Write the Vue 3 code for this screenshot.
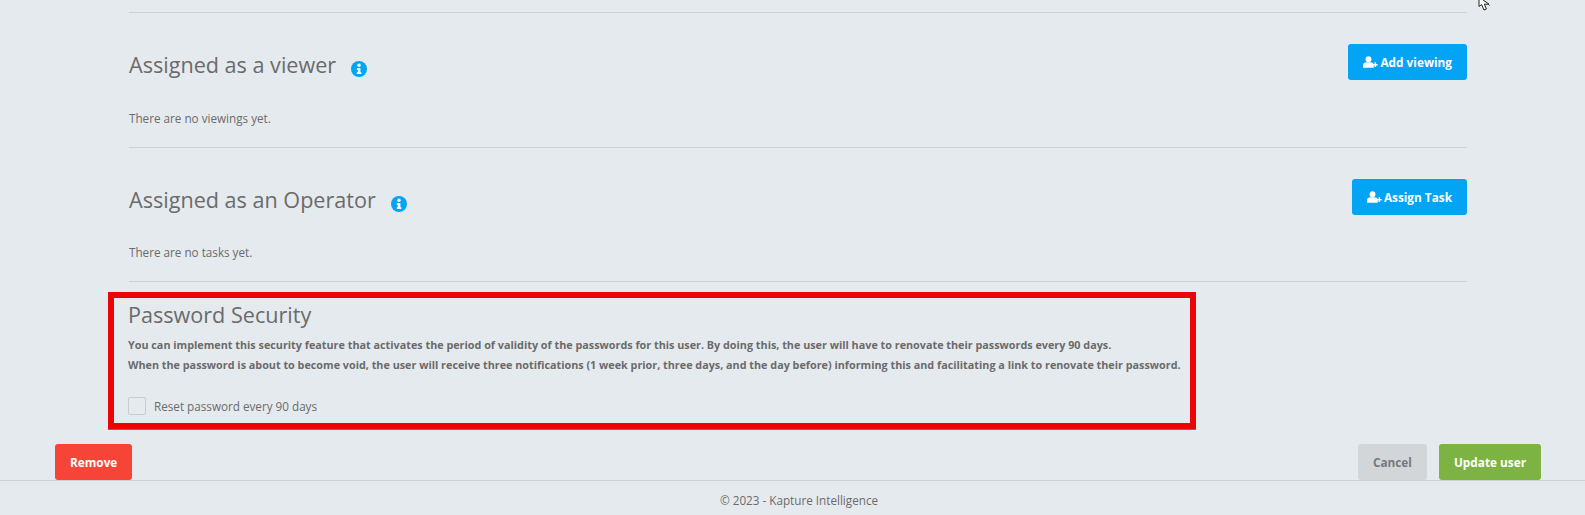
<script setup>
const sections = [
  { title: 'Assigned as a viewer', button: 'Add viewing', empty: 'There are no viewings yet.' },
  { title: 'Assigned as an Operator', button: 'Assign Task', empty: 'There are no tasks yet.' },
]
</script>

<template>
  <div class="page">
    <svg class="cursor" width="14" height="12" viewBox="0 0 14 12">
      <path d="M1 -3V6.5L3.6 4.6L6 10L8.4 9L6.4 4.2H11Z" fill="#fff" stroke="#222" stroke-width="1" />
      <path d="M10.5 4.5L11.5 5.5" stroke="#222" stroke-width="1" fill="none" />
    </svg>
    <main class="content">
      <section v-for="s in sections" :key="s.title" class="assigned">
        <div class="assigned-head">
          <h2>{{ s.title }}</h2>
          <svg class="info" viewBox="0 0 16 16" width="16" height="16">
            <circle cx="8" cy="8" r="8" fill="#03a4f4" />
            <circle cx="8" cy="4.2" r="1.7" fill="#fff" />
            <path d="M5.8 7H9.4V11.2H10.4V12.9H5.8V11.2H6.8V8.7H5.8Z" fill="#fff" />
          </svg>
          <button class="btn blue">
            <svg class="user-plus" viewBox="0 0 18 14" width="18" height="14">
              <circle cx="6.6" cy="3.6" r="3.5" fill="#fff" />
              <path d="M0 14V11.2C0 8.8 1.9 7.4 3.9 7.4H9.3C10.9 7.4 12.3 8.4 12.9 10V14Z" fill="#fff" />
              <path d="M14.8 7.4V13M12 10.2H17.6" stroke="#fff" stroke-width="1.8" />
            </svg>
            {{ s.button }}
          </button>
        </div>
        <p class="empty">{{ s.empty }}</p>
      </section>

      <section class="security">
        <h2>Password Security</h2>
        <p class="desc">
          You can implement this security feature that activates the period of validity of the passwords for this user. By doing this, the user will have to renovate their passwords every 90 days.<br>
          When the password is about to become void, the user will receive three notifications (1 week prior, three days, and the day before) informing this and facilitating a link to renovate their password.
        </p>
        <label class="check">
          <span class="box"></span>
          Reset password every 90 days
        </label>
      </section>
    </main>

    <div class="actions">
      <button class="btn red">Remove</button>
      <div class="right">
        <button class="btn grey">Cancel</button>
        <button class="btn green">Update user</button>
      </div>
    </div>

    <footer>© 2023 - Kapture Intelligence</footer>
  </div>
</template>

<style>
html, body {
  margin: 0;
  background: #e5eaee;
}
</style>

<style scoped>
.page {
  position: relative;
  height: 515px;
  overflow: hidden;
  background: #e5eaee;
  color: #6b6b6b;
  font-family: "Open Sans", sans-serif;
}
.cursor {
  position: absolute;
  top: 0;
  left: 1478px;
}
.content {
  padding-top: 12px;
}
.assigned {
  margin: 0 118px 0 129px;
  height: 134px;
  border-top: 1px solid #cdd1d4;
}
.assigned + .assigned {
  height: 133px;
  border-bottom: 1px solid #cdd1d4;
}
.assigned-head {
  display: flex;
  align-items: flex-start;
  padding-top: 31px;
  height: 36px;
}
.assigned-head h2 {
  margin: 3px 0 0;
  font-size: 21.6px;
  font-weight: 400;
  line-height: 36px;
}
.info {
  margin: 17px 0 0 15px;
}
.btn {
  border: none;
  border-radius: 3px;
  height: 36px;
  font-family: "Open Sans", sans-serif;
  font-size: 11.8px;
  font-weight: 700;
  color: #fff;
  padding: 0 15px;
}
.blue {
  margin-left: auto;
  background: #03a4f4;
  display: flex;
  align-items: center;
  gap: 2px;
}
.user-plus {
  width: 15px;
  height: 12px;
}
.empty {
  margin: 29px 0 0;
  font-size: 11.7px;
  line-height: 18px;
}
.assigned + .assigned .empty {
  margin-top: 28px;
}
.security {
  margin: 10px 0 0 108px;
  width: 1088px;
  height: 137px;
  box-sizing: border-box;
  border: 6px solid #ec0508;
  box-shadow: 0 1px 0 #6c7276;
  padding: 0 0 0 14px;
}
.security h2 {
  margin: -1px 0 0;
  font-size: 21.6px;
  font-weight: 400;
  line-height: 36px;
}
.desc {
  margin: 2px 0 0;
  font-size: 10.8px;
  font-weight: 700;
  line-height: 20px;
}
.check {
  display: flex;
  align-items: center;
  gap: 8px;
  margin-top: 22px;
  font-size: 11.7px;
  line-height: 18px;
}
.box {
  width: 16px;
  height: 16px;
  border: 1px solid #c8ccd0;
  border-radius: 2px;
}
.actions {
  display: flex;
  justify-content: space-between;
  margin-top: 15px;
  padding: 0 44px 0 55px;
}
.right {
  display: flex;
  gap: 12px;
}
.red {
  background: #f64538;
}
.grey {
  background: #d2d6d9;
  color: #747a7e;
}
.green {
  background: #7db343;
}
footer {
  border-top: 1px solid #cdd1d4;
  text-align: center;
  font-size: 11.7px;
  line-height: 18px;
  padding: 10px 0 0 13px;
}
</style>
